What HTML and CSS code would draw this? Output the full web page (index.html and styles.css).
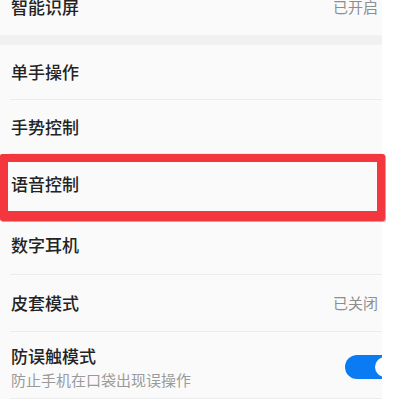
FILE: index.html
```html
<!DOCTYPE html>
<html lang="zh-CN">
<head>
<meta charset="utf-8">
<link rel="stylesheet" href="styles.css">
</head>
<body>
<div class="page">
  <div class="panel">
    <div class="list">
      <div class="row row-top"><span class="title">智能识屏</span><span class="value">已开启</span></div>
    </div>
    <div class="gap"></div>
    <div class="list">
      <div class="row row-1"><span class="title">单手操作</span></div>
      <div class="row row-2"><span class="title">手势控制</span></div>
      <div class="row row-3"><span class="title">语音控制</span></div>
      <div class="row row-4"><span class="title">数字耳机</span></div>
      <div class="row row-5"><span class="title">皮套模式</span><span class="value">已关闭</span></div>
      <div class="row row-6">
        <div class="stack">
          <span class="title">防误触模式</span>
          <span class="sub">防止手机在口袋出现误操作</span>
        </div>
        <div class="toggle"><div class="knob"></div></div>
      </div>
    </div>
  </div>
  <div class="highlight"></div>
</div>
</body>
</html>
```
FILE: styles.css
```css
html, body {
  margin: 0;
  padding: 0;
  background: #ffffff;
}
body {
  font-family: "Noto Sans CJK SC", "Noto Sans", sans-serif;
  width: 402px;
  height: 401px;
  overflow: hidden;
}
.page {
  position: relative;
  width: 402px;
  height: 401px;
  overflow: hidden;
}
.panel {
  width: 382px;
  margin-top: -21px;
  background: #fafafa;
  overflow: hidden;
}
.list {
  display: flex;
  flex-direction: column;
}
.row {
  box-sizing: border-box;
  margin-left: 10px;
  padding: 0 4px 0 1px;
  display: flex;
  align-items: center;
  justify-content: space-between;
  border-bottom: 1px solid #ececec;
}
.row-top { height: 56px; border-bottom: none; }
.row-1 { height: 55px; }
.row-2 { height: 54px; }
.row-3 { height: 61px; }
.row-4 { height: 60px; }
.row-5 { height: 57px; }
.row-6 { height: 67px; padding-top: 4px; }
.gap {
  height: 10px;
  background: #f1f1f1;
}
.title {
  font-size: 17px;
  font-weight: 500;
  line-height: 24px;
  color: #232323;
}
.value {
  font-size: 15px;
  line-height: 22px;
  color: #8e8e8e;
}
.stack {
  display: flex;
  flex-direction: column;
}
.sub {
  margin-top: 1px;
  font-size: 15px;
  line-height: 22px;
  color: #9a9a9a;
}
.toggle {
  position: relative;
  width: 52px;
  height: 24px;
  margin-right: -19px;
  border-radius: 12px;
  background: #0a7bf2;
  flex: none;
}
.knob {
  position: absolute;
  right: 2px;
  top: 2px;
  width: 20px;
  height: 20px;
  border-radius: 50%;
  background: #ffffff;
}
.highlight {
  position: absolute;
  left: 0;
  top: 154px;
  width: 385px;
  height: 67px;
  box-sizing: border-box;
  border: 8px solid #f4363e;
  border-bottom-width: 10px;
  border-radius: 2px;
  box-shadow: 1px 1px 0 rgba(170, 40, 90, 0.45);
}
```
